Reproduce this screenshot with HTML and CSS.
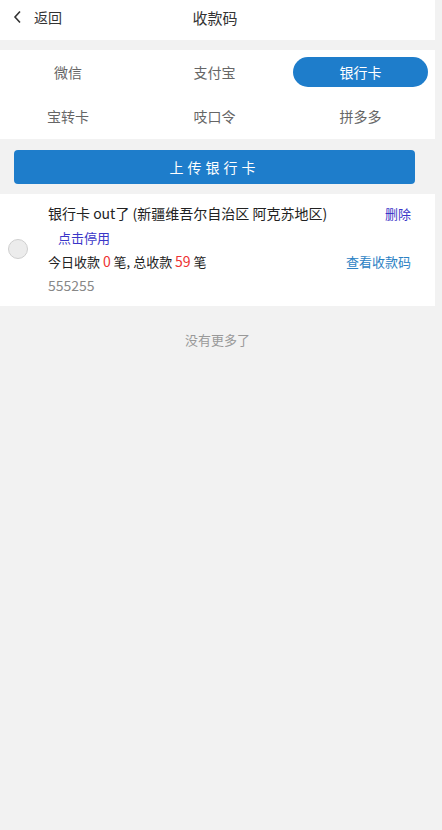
FILE: index.html
```html
<!DOCTYPE html>
<html>
<head>
    <meta charset="UTF-8">
    <title>收款码</title>
    <link rel="stylesheet" href="styles.css">
</head>
<body>
    <div class="page">
        <div class="header">
            <a class="back">
                <svg width="10" height="14" viewBox="0 0 10 14"><path d="M7 1.5L2 7l5 5.5" fill="none" stroke="#333" stroke-width="1.6"/></svg>
                <span>返回</span>
            </a>
            <div class="title">收款码</div>
        </div>

        <div class="tabs">
            <div class="tab">微信</div>
            <div class="tab">支付宝</div>
            <div class="tab last active"><span>银行卡</span></div>
            <div class="tab">宝转卡</div>
            <div class="tab">吱口令</div>
            <div class="tab last">拼多多</div>
        </div>

        <div class="upload">
            <button>上传银行卡</button>
        </div>

        <div class="card">
            <div class="radio"><span></span></div>
            <div class="info">
                <div class="row">
                    <span class="name">银行卡 out了 (新疆维吾尔自治区 阿克苏地区)</span>
                    <a class="del">删除</a>
                </div>
                <div class="row">
                    <a class="stop">点击停用</a>
                </div>
                <div class="row">
                    <span class="count">今日收款 <em>0</em> 笔, 总收款 <em>59</em> 笔</span>
                    <a class="view">查看收款码</a>
                </div>
                <div class="row">
                    <span class="num">555255</span>
                </div>
            </div>
        </div>

        <p class="nomore">没有更多了</p>
    </div>
</body>
</html>
```

FILE: styles.css
```css
body {
    margin: 0;
    background-color: #f2f2f2;
    font-family: "Noto Sans CJK SC", "Liberation Sans", sans-serif;
    color: #333;
}

.page {
    width: 435px;
}

.header {
    position: relative;
    height: 40px;
    background-color: #fff;
    display: flex;
    align-items: center;
    justify-content: center;
    padding-bottom: 6px;
    padding-right: 5px;
    box-sizing: border-box;
}

.header .back {
    position: absolute;
    left: 13px;
    top: 0;
    height: 34px;
    display: flex;
    align-items: center;
    gap: 11px;
    font-size: 14px;
    color: #333;
}

.header .title {
    font-size: 15px;
    color: #333;
}

.tabs {
    margin-top: 10px;
    background-color: #fff;
    display: grid;
    grid-template-columns: 136px 157px 1fr;
    grid-auto-rows: 44px;
    padding-bottom: 1px;
}

.tab {
    display: flex;
    align-items: center;
    justify-content: center;
    font-size: 14px;
    color: #666;
}

.tab.last {
    padding-right: 7px;
}

.tab.active span {
    display: flex;
    align-items: center;
    justify-content: center;
    width: 135px;
    height: 30px;
    border-radius: 15px;
    background-color: #1e7dcb;
    color: #fff;
}

.upload {
    padding: 11px 20px 10px 14px;
}

.upload button {
    display: block;
    width: 100%;
    height: 34px;
    border: none;
    border-radius: 4px;
    background-color: #1e7dcb;
    color: #fff;
    font-family: inherit;
    font-size: 14px;
    letter-spacing: 4px;
}

.card {
    background-color: #fff;
    display: flex;
    align-items: center;
    padding: 7px 24px 9px 0;
}

.radio {
    width: 48px;
    display: flex;
    justify-content: center;
    padding-right: 12px;
    box-sizing: border-box;
}

.radio span {
    width: 18px;
    height: 18px;
    border-radius: 50%;
    border: 1px solid #cfcfcf;
    background-color: #ececec;
}

.info {
    flex: 1;
}

.row {
    display: flex;
    justify-content: space-between;
    align-items: center;
    height: 24px;
}

.name {
    font-size: 14px;
    color: #222;
}

.del {
    font-size: 13px;
    color: #3a36c8;
}

.stop {
    font-size: 13px;
    color: #3a36c8;
    padding-left: 10px;
}

.count {
    font-size: 13px;
    color: #222;
}

.count em {
    font-style: normal;
    color: #e33;
    font-size: 14px;
}

.view {
    font-size: 13px;
    color: #2c82c4;
}

.num {
    font-size: 14px;
    color: #888;
}

.nomore {
    margin: 24px 0 0;
    text-align: center;
    font-size: 13px;
    color: #999;
}
```
